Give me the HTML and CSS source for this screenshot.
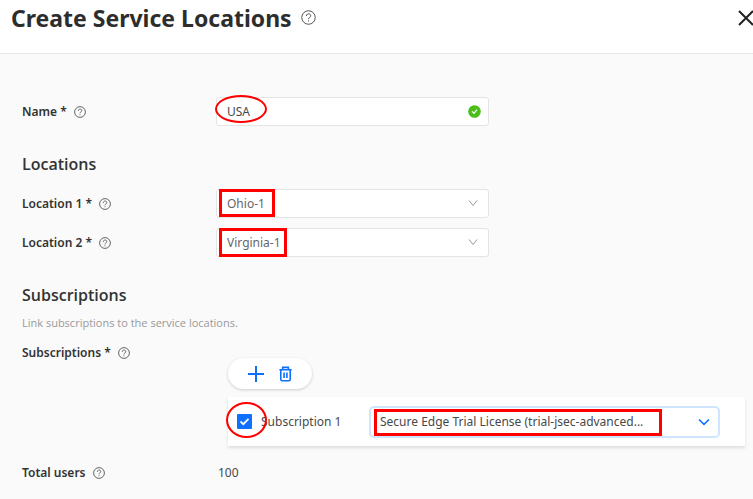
FILE: index.html
```html
<!DOCTYPE html>
<html lang="en">
<head>
<meta charset="utf-8">
<meta name="viewport" content="width=device-width, initial-scale=1">
<title>Create Service Locations</title>
<link rel="stylesheet" href="styles.css">
</head>
<body>
<svg class="sprite" aria-hidden="true">
  <symbol id="help" viewBox="0 0 12 12">
    <circle cx="6" cy="6" r="5.4"/>
    <path d="M4.3 4.8C4.3 2.5 7.8 2.5 7.8 4.6C7.8 5.9 6 5.8 6 7.3M6 8.3V9.2"/>
  </symbol>
  <symbol id="chevron" viewBox="0 0 12 12"><path d="M2 3.5L6 8.5L10 3.5"/></symbol>
  <symbol id="chevron-wide" viewBox="0 0 12 12"><path d="M1 3.5L6 8.3L11 3.5"/></symbol>
</svg>
<header class="header">
  <h1 class="title">Create Service Locations</h1>
  <svg class="help help-large"><use href="#help"/></svg>
  <button class="close" type="button" aria-label="Close">
    <svg class="close-icon" viewBox="0 0 16 16"><path d="M1 1L15 15M15 1L1 15"/></svg>
  </button>
</header>
<main class="content">
  <form>
    <div class="row">
      <label class="label" for="name">Name * <svg class="help"><use href="#help"/></svg></label>
      <div class="field">
        <input class="control" id="name" type="text" value="USA">
        <svg class="valid" viewBox="0 0 13 13"><circle cx="6.5" cy="6.5" r="6.3"/><path d="M4 6.4L6 8.3L9 4.6"/></svg>
        <span class="mark mark-name"></span>
      </div>
    </div>
    <h2 class="section">Locations</h2>
    <div class="rows">
      <div class="row">
        <label class="label" for="loc1">Location 1 * <svg class="help"><use href="#help"/></svg></label>
        <div class="field">
          <select class="control muted" id="loc1"><option>Ohio-1</option></select>
          <svg class="chevron"><use href="#chevron"/></svg>
          <span class="mark mark-ohio"></span>
        </div>
      </div>
      <div class="row">
        <label class="label" for="loc2">Location 2 * <svg class="help"><use href="#help"/></svg></label>
        <div class="field">
          <select class="control muted" id="loc2"><option>Virginia-1</option></select>
          <svg class="chevron"><use href="#chevron"/></svg>
          <span class="mark mark-virginia"></span>
        </div>
      </div>
    </div>
    <h2 class="section">Subscriptions</h2>
    <p class="hint">Link subscriptions to the service locations.</p>
    <div class="row row-wide">
      <div class="label">Subscriptions * <svg class="help"><use href="#help"/></svg></div>
      <div class="subscriptions">
        <div class="toolbar">
          <button class="tool" type="button" aria-label="Add"><svg class="tool-icon" viewBox="0 0 18 18"><path d="M9 1V17M1 9H17"/></svg></button>
          <button class="tool" type="button" aria-label="Delete"><svg class="tool-icon trash" viewBox="0 0 18 18"><path d="M2.5 4.5H15.5M6 4.5V2H12V4.5M4 4.5V14.5Q4 16.2 5.5 16.2H12.5Q14 16.2 14 14.5V4.5M7.5 7.5V13.2M10.5 7.5V13.2"/></svg></button>
        </div>
        <div class="panel">
          <label class="item" for="sub1">
            <span class="tick">
              <input class="checkbox" id="sub1" type="checkbox" checked>
              <svg class="check" viewBox="0 0 15 15"><path d="M3.5 7.5L6.3 10.2L11.5 4.9"/></svg>
              <span class="mark mark-check"></span>
            </span>
            Subscription 1
          </label>
          <div class="field license">
            <select class="control active" aria-label="Subscription 1 license"><option>Secure Edge Trial License (trial-jsec-advanced...</option></select>
            <svg class="chevron chevron-active"><use href="#chevron-wide"/></svg>
            <span class="mark mark-license"></span>
          </div>
        </div>
      </div>
    </div>
    <div class="row total">
      <div class="label">Total users <svg class="help"><use href="#help"/></svg></div>
      <output class="value">100</output>
    </div>
  </form>
</main>
</body>
</html>
```
FILE: styles.css
```css
* { box-sizing: border-box; }
body {
  margin: 0;
  min-height: 100vh;
  overflow: hidden;
  background: #fafafa;
  color: #484848;
  font: 12px/18px "Noto Sans", "Open Sans", sans-serif;
}
svg { fill: none; stroke: currentColor; flex: none; }
button { padding: 0; border: 0; background: none; color: inherit; }
.sprite { position: absolute; width: 0; height: 0; }
.header {
  display: flex;
  align-items: center;
  height: 54px;
  padding: 0 0 18px 11px;
  background: #fff;
  border-bottom: 1px solid #e8e8e8;
}
.title { margin: 0; color: #2d2d2d; font-size: 23px; font-weight: 700; line-height: 32px; }
.help { width: 12px; height: 12px; color: #555; stroke-width: 0.9; }
.help-large { width: 15px; height: 15px; margin-left: 9px; stroke-width: 0.8; }
.close { height: 16px; margin: 0 -1px 0 auto; color: #222; }
.close-icon { display: block; width: 16px; height: 16px; stroke-width: 2; }
.content { padding: 43px 8px 16px 22px; }
.row { display: grid; grid-template-columns: 194px minmax(0, 273px); align-items: center; }
.rows { display: grid; gap: 10px; }
.row-wide { grid-template-columns: 206px minmax(0, 1fr); align-items: start; }
.label { display: flex; align-items: center; gap: 7px; color: #333; font-weight: 600; }
.field { position: relative; display: flex; }
.control {
  width: 100%;
  height: 29px;
  padding: 0 10px;
  border: 1px solid #e4e4e4;
  border-radius: 3px;
  outline: 0;
  background: #fff;
  color: #484848;
  font: inherit;
  appearance: none;
}
.muted { color: #666; }
.active { height: 32px; border: 2px solid #cfe5ff; border-radius: 5px; padding-left: 9px; }
.valid { position: absolute; top: 8px; right: 8px; width: 13px; height: 13px; fill: #4abf17; stroke: none; }
.valid path { fill: none; stroke: #fff; stroke-width: 1.3; }
.chevron { position: absolute; top: 8px; right: 10px; width: 12px; height: 12px; color: #999; pointer-events: none; }
.chevron-active { top: 10px; color: #0f6fff; stroke-width: 1.6; }
.section { margin: 26px 0 13px; color: #333; font: 600 16px/24px "Open Sans", "Noto Sans", sans-serif; }
.hint { margin: -6px 0 12px; color: #999; font: 11px/18px "Open Sans", "Noto Sans", sans-serif; }
.subscriptions { padding-top: 14px; }
.toolbar {
  display: inline-flex;
  align-items: center;
  gap: 12px;
  height: 31px;
  padding: 0 18px 0 19px;
  border-radius: 16px;
  background: #fff;
  color: #0f6fff;
  box-shadow: 0 1px 3px #ccc;
  vertical-align: top;
}
.tool-icon { display: block; width: 18px; height: 18px; stroke-width: 2; }
.trash { width: 17px; stroke-width: 1.7; }
.panel {
  display: grid;
  grid-template-columns: 132px minmax(0, 351px);
  align-items: center;
  height: 49px;
  margin-top: 8px;
  padding: 0 9px;
  background: #fff;
  box-shadow: 0 2px 3px #ddd;
}
.item { display: flex; align-items: center; gap: 9px; }
.tick { position: relative; display: flex; }
.checkbox { width: 15px; height: 15px; margin: 0; appearance: none; background: #0f6fff; border-radius: 1px; }
.checkbox:not(:checked) { background: #fff; border: 1px solid #999; }
.check { position: absolute; inset: 0; width: 15px; height: 15px; color: #fff; stroke-width: 1.8; pointer-events: none; }
.mark { position: absolute; border: 3px solid #f00; pointer-events: none; }
.mark-name { top: -2px; left: -1px; width: 52px; height: 28px; border-width: 2px; border-radius: 50%; }
.mark-ohio { top: 0; left: 3px; width: 56px; height: 28px; }
.mark-virginia { top: 0; left: 3px; width: 68px; height: 29px; }
.mark-check { top: -12px; left: -11px; width: 41px; height: 36px; border-width: 2px; border-radius: 50%; }
.mark-license { top: 3px; left: 5px; width: 288px; height: 27px; }
.total { margin-top: 18px; }
.value { padding-left: 2px; }
```
